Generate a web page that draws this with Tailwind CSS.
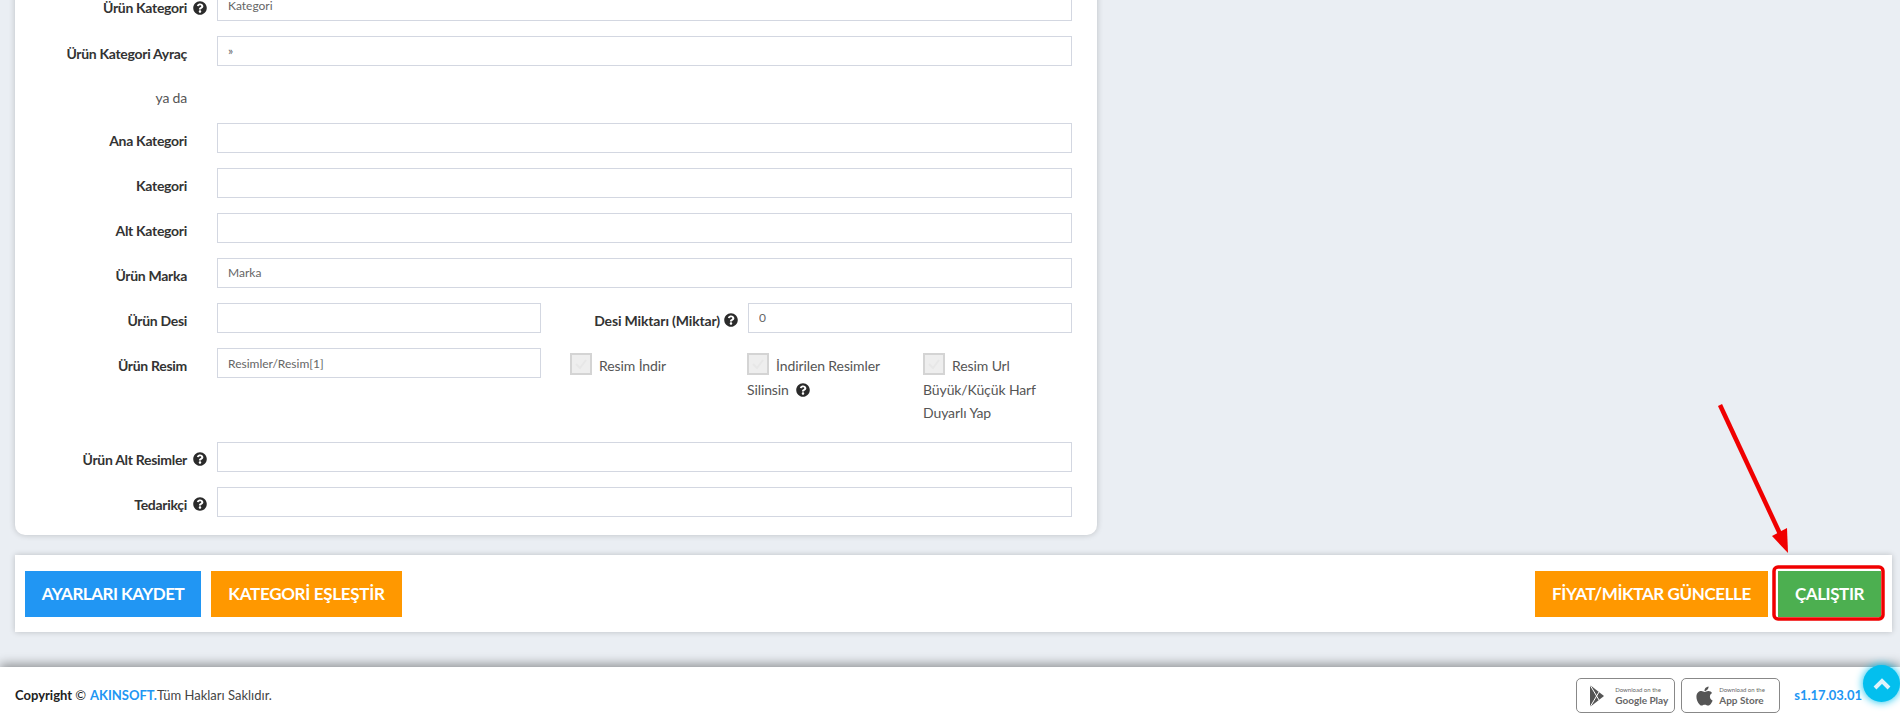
<!DOCTYPE html>
<html lang="tr">
<head>
  <meta charset="UTF-8" />
  <title>Ürün Ayarları</title>
  <script src="https://cdn.jsdelivr.net/npm/@tailwindcss/browser@4"></script>
</head>
<body class="bg-[#eaeef3] font-['Lato','Roboto',sans-serif] text-[14px] text-[#555]">

<!-- ikonlar -->
<svg class="hidden">
  <symbol id="yardim" viewBox="0 0 512 512"><path d="M504 256c0 136.997-111.043 248-248 248S8 392.997 8 256C8 119.083 119.043 8 256 8s248 111.083 248 248zM262.655 90c-54.497 0-89.255 22.957-116.549 63.758-3.536 5.286-2.353 12.415 2.715 16.258l34.699 26.31c5.205 3.947 12.621 3.008 16.665-2.122 17.864-22.658 30.113-35.797 57.303-35.797 20.429 0 45.698 13.148 45.698 32.958 0 14.976-12.363 22.667-32.534 33.976C247.128 238.528 216 254.941 216 296v4c0 6.627 5.373 12 12 12h56c6.627 0 12-5.373 12-12v-1.333c0-28.462 83.186-29.647 83.186-106.667 0-58.002-60.165-102-116.531-102zM256 338c-25.365 0-46 20.635-46 46 0 25.364 20.635 46 46 46s46-20.636 46-46c0-25.365-20.635-46-46-46z"/></symbol>
  <symbol id="tik" viewBox="0 0 18 18"><path d="M4 9 L8 13 L14 5" fill="none" stroke="#e7e7e7" stroke-width="2"/></symbol>
</svg>

<div class="relative h-[718px] w-[1900px] overflow-hidden flex flex-col">

  <!-- Form karti -->
  <div class="ml-[15px] mt-[-50px] w-[1082px] h-[585px] shrink-0 bg-white rounded-b-[10px] shadow-[0_0_6px_rgba(0,0,0,0.2)] pt-[41px] pr-[25px]">

    <div class="flex h-[30px] mb-[15px]">
      <label class="w-[172px] text-right font-bold tracking-[-0.3px] text-[#333] leading-[34px]">Ürün Kategori</label>
      <span class="w-[30px] pl-[6px] pt-[3px] flex items-center"><svg class="w-[14px] h-[14px] fill-[#2b2b2b]"><use href="#yardim"/></svg></span>
      <input class="flex-1 border border-[#d3d7e1] px-[10px] text-[12px] text-[#666]" value="Kategori">
    </div>

    <div class="flex h-[30px] mb-[15px]">
      <label class="w-[172px] text-right font-bold tracking-[-0.3px] text-[#333] leading-[35px]">Ürün Kategori Ayraç</label>
      <span class="w-[30px]"></span>
      <input class="flex-1 border border-[#d3d7e1] px-[10px] text-[12px] text-[#666]" value="»">
    </div>

    <div class="flex h-[30px] mb-[12px]">
      <label class="w-[172px] text-right text-[#555] tracking-[-0.2px] leading-[33px]">ya da</label>
    </div>

    <div class="flex h-[30px] mb-[15px]">
      <label class="w-[172px] text-right font-bold tracking-[-0.3px] text-[#333] leading-[35px]">Ana Kategori</label>
      <span class="w-[30px]"></span>
      <input class="flex-1 border border-[#d3d7e1] px-[10px] text-[12px] text-[#666]">
    </div>

    <div class="flex h-[30px] mb-[15px]">
      <label class="w-[172px] text-right font-bold tracking-[-0.3px] text-[#333] leading-[35px]">Kategori</label>
      <span class="w-[30px]"></span>
      <input class="flex-1 border border-[#d3d7e1] px-[10px] text-[12px] text-[#666]">
    </div>

    <div class="flex h-[30px] mb-[15px]">
      <label class="w-[172px] text-right font-bold tracking-[-0.3px] text-[#333] leading-[35px]">Alt Kategori</label>
      <span class="w-[30px]"></span>
      <input class="flex-1 border border-[#d3d7e1] px-[10px] text-[12px] text-[#666]">
    </div>

    <div class="flex h-[30px] mb-[15px]">
      <label class="w-[172px] text-right font-bold tracking-[-0.3px] text-[#333] leading-[35px]">Ürün Marka</label>
      <span class="w-[30px]"></span>
      <input class="flex-1 border border-[#d3d7e1] px-[10px] text-[12px] text-[#666]" value="Marka">
    </div>

    <div class="flex h-[30px] mb-[15px]">
      <label class="w-[172px] text-right font-bold tracking-[-0.3px] text-[#333] leading-[35px]">Ürün Desi</label>
      <span class="w-[30px]"></span>
      <input class="w-[324px] border border-[#d3d7e1] px-[10px] text-[12px] text-[#666]">
      <label class="w-[179px] text-right font-bold tracking-[-0.15px] text-[#333] leading-[35px]">Desi Miktarı (Miktar)</label>
      <span class="w-[28px] pl-[4px] pt-[3px] flex items-center"><svg class="w-[14px] h-[14px] fill-[#2b2b2b]"><use href="#yardim"/></svg></span>
      <input class="flex-1 border border-[#d3d7e1] px-[10px] text-[12px] text-[#666]" value="0">
    </div>

    <div class="flex h-[79px] mb-[15px]">
      <label class="w-[172px] text-right font-bold tracking-[-0.3px] text-[#333] leading-[35px]">Ürün Resim</label>
      <span class="w-[30px]"></span>
      <input class="w-[324px] h-[30px] border border-[#d3d7e1] px-[10px] text-[12px] text-[#666]" value="Resimler/Resim[1]">
      <div class="w-[177px] ml-[29px] mt-[6px] leading-[23.5px] tracking-[-0.1px] flex items-start gap-[7px]">
        <span class="w-[22px] h-[22px] shrink-0 -mt-[1px] bg-[#eee] border-2 border-[#d4d4d4]"><svg class="w-[18px] h-[18px]"><use href="#tik"/></svg></span>
        <span>Resim İndir</span>
      </div>
      <div class="w-[176px] mt-[6px] leading-[23.5px] tracking-[-0.1px]">
        <span class="inline-block align-top w-[22px] h-[22px] -mt-[1px] bg-[#eee] border-2 border-[#d4d4d4] mr-[7px]"><svg class="w-[18px] h-[18px]"><use href="#tik"/></svg></span>İndirilen Resimler<br>
        Silinsin
        <svg class="inline w-[14px] h-[14px] ml-[4px] mb-[2px] fill-[#2b2b2b]"><use href="#yardim"/></svg>
      </div>
      <div class="flex-1 mt-[6px] leading-[23.5px] tracking-[-0.1px]">
        <span class="inline-block align-top w-[22px] h-[22px] -mt-[1px] bg-[#eee] border-2 border-[#d4d4d4] mr-[7px]"><svg class="w-[18px] h-[18px]"><use href="#tik"/></svg></span>Resim Url<br>
        Büyük/Küçük Harf<br>
        Duyarlı Yap
      </div>
    </div>

    <div class="flex h-[30px] mb-[15px]">
      <label class="w-[172px] text-right font-bold tracking-[-0.3px] text-[#333] leading-[35px]">Ürün Alt Resimler</label>
      <span class="w-[30px] pl-[6px] pt-[3px] flex items-center"><svg class="w-[14px] h-[14px] fill-[#2b2b2b]"><use href="#yardim"/></svg></span>
      <input class="flex-1 border border-[#d3d7e1] px-[10px] text-[12px] text-[#666]">
    </div>

    <div class="flex h-[30px]">
      <label class="w-[172px] text-right font-bold tracking-[-0.3px] text-[#333] leading-[35px]">Tedarikçi</label>
      <span class="w-[30px] pl-[6px] pt-[3px] flex items-center"><svg class="w-[14px] h-[14px] fill-[#2b2b2b]"><use href="#yardim"/></svg></span>
      <input class="flex-1 border border-[#d3d7e1] px-[10px] text-[12px] text-[#666]">
    </div>
  </div>

  <!-- Buton cubugu -->
  <div class="ml-[15px] mt-[20px] w-[1877px] h-[77px] shrink-0 bg-white shadow-[0_0_6px_rgba(0,0,0,0.2)] flex items-center justify-between pl-[10px] pr-[11px]">
    <div class="flex gap-[10px]">
      <button class="w-[176px] h-[46px] bg-[#2196f3] text-white font-bold text-[17px] tracking-[-0.5px]">AYARLARI KAYDET</button>
      <button class="w-[191px] h-[46px] bg-[#ff9800] text-white font-bold text-[17px] tracking-[-0.3px]">KATEGORİ EŞLEŞTİR</button>
    </div>
    <div class="flex items-center gap-[10px]">
      <button class="w-[233px] h-[46px] bg-[#ff9800] text-white font-bold text-[17px] tracking-[-0.4px]">FİYAT/MİKTAR GÜNCELLE</button>
      <button class="w-[103px] h-[46px] bg-[#4caf50] text-white font-bold text-[17px] tracking-[-0.4px]">ÇALIŞTIR</button>
    </div>
  </div>

  <!-- Alt bilgi -->
  <footer class="mt-auto h-[51px] shrink-0 bg-white shadow-[0_-3px_10px_rgba(0,0,0,0.38)] flex items-center pt-[6px] pl-[15px] pr-[38px] relative text-[13px]">
    <span class="font-bold text-[#222]">Copyright <span class="font-normal">©</span></span>
    <span class="ml-[4px] font-bold text-[#2196f3]">AKINSOFT.</span><span class="text-[#444]">Tüm Hakları Saklıdır.</span>
    <div class="ml-auto flex items-center gap-[6px]">
      <div class="w-[99px] h-[35px] border-[1.5px] border-[#888] rounded-[5px] flex items-center pl-[13px] gap-[11px]">
        <svg class="w-[14px] h-[22px]" viewBox="0 0 14 22"><path d="M0 0 L14 11 L0 22 Z" fill="#555"/><path d="M0 0 L9 15 M0 22 L9 7" stroke="#fff" stroke-width="1" fill="none"/></svg>
        <div class="text-[#666] leading-none whitespace-nowrap">
          <div class="text-[6px]">Download on the</div>
          <div class="text-[10px] font-bold mt-[2px]">Google Play</div>
        </div>
      </div>
      <div class="w-[99px] h-[35px] border-[1.5px] border-[#888] rounded-[5px] flex items-center pl-[14px] gap-[6px]">
        <svg class="w-[17px] h-[22px] fill-[#555]" viewBox="0 0 384 512"><path d="M318.7 268.7c-.2-36.7 16.4-64.4 50-84.8-18.8-26.9-47.2-41.7-84.7-44.6-35.5-2.8-74.3 20.7-88.5 20.7-15 0-49.4-19.7-76.4-19.7C63.3 141.2 4 184.8 4 273.5q0 39.3 14.4 81.2c12.8 36.7 59 126.7 107.2 125.2 25.2-.6 43-17.9 75.8-17.9 31.8 0 48.3 17.9 76.4 17.9 48.6-.7 90.4-82.5 102.6-119.3-65.2-30.7-61.7-90-61.7-91.9zm-56.6-164.2c27.3-32.4 24.8-61.9 24-72.5-24.1 1.4-52 16.4-67.9 34.9-17.5 19.8-27.8 44.3-25.6 71.9 26.1 2 49.9-11.4 69.5-34.3z"/></svg>
        <div class="text-[#666] leading-none whitespace-nowrap">
          <div class="text-[6px]">Download on the</div>
          <div class="text-[10px] font-bold mt-[2px]">App Store</div>
        </div>
      </div>
      <span class="ml-[8px] font-bold text-[#2196f3] text-[13px]">s1.17.03.01</span>
    </div>
  </footer>

  <!-- Yukari butonu -->
  <div class="absolute left-[1863px] top-[665px] w-[37px] h-[37px] rounded-full bg-[#03bfee] shadow-[0_0_8px_#03bfee] flex items-center justify-center">
    <svg class="w-[18px] h-[12px]" viewBox="0 0 18 12"><path d="M2 10 L9 3 L16 10" fill="none" stroke="#dff4fb" stroke-width="4"/></svg>
  </div>

  <!-- Kirmizi ok ve cerceve -->
  <svg class="absolute left-0 top-0 pointer-events-none" width="1900" height="718">
    <line x1="1720" y1="405" x2="1781" y2="536" stroke="#f00000" stroke-width="4.5"/>
    <polygon points="1788,553 1772,536 1787,528" fill="#f00000"/>
    <rect x="1774" y="567" width="109" height="52" rx="4" fill="none" stroke="#f00000" stroke-width="3.5"/>
  </svg>
</div>
</body>
</html>
